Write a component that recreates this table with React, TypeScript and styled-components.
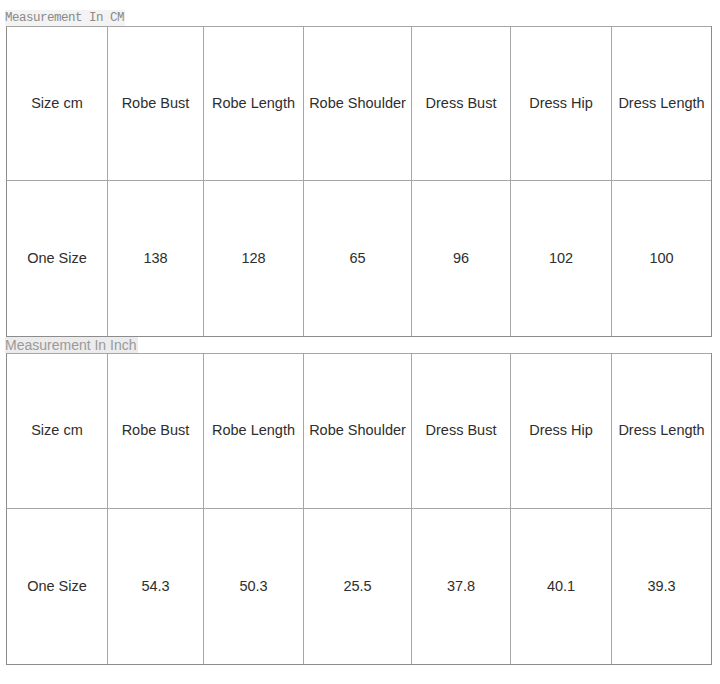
import React from 'react';
import styled, { createGlobalStyle } from 'styled-components';

const GlobalStyle = createGlobalStyle`
  html, body {
    margin: 0;
    padding: 0;
    background: #fff;
  }
`;

const Page = styled.div`
  width: 720px;
  padding: 10px 0 0 5px;
  box-sizing: border-box;
`;

const Caption = styled.div<{ mono?: boolean }>`
  width: fit-content;
  height: 16px;
  line-height: 16px;
  padding-right: 1px;
  font-family: ${({ mono }) => (mono ? '"Liberation Mono", "DejaVu Sans Mono", monospace' : '"Liberation Sans", Arial, sans-serif')};
  font-size: ${({ mono }) => (mono ? '12.5px' : '14px')};
  color: ${({ mono }) => (mono ? '#8a8a8a' : '#9a9a9a')};
  background: ${({ mono }) => (mono ? '#f3f3f3' : '#ececec')};
  letter-spacing: ${({ mono }) => (mono ? '-0.5px' : '0')};
  overflow: hidden;
`;

const Grid = styled.div<{ rows: string }>`
  display: grid;
  grid-template-columns: 101px 96px 100px 108px 99px 101px 100px;
  grid-template-rows: ${({ rows }) => rows};
  width: 706px;
  margin-left: 1px;
  box-sizing: border-box;
  border-right: 1px solid #8c8c8c;
  border-bottom: 1px solid #8c8c8c;
`;

const Cell = styled.div<{ first?: boolean }>`
  display: flex;
  align-items: center;
  justify-content: center;
  box-sizing: border-box;
  padding-bottom: 2px;
  border-top: 1px solid #a6a6a6;
  border-left: 1px solid ${({ first }) => (first ? '#8c8c8c' : '#a6a6a6')};
  font-family: "Liberation Sans", Arial, sans-serif;
  font-size: 14.5px;
  color: #2e2e2e;
  white-space: nowrap;
`;

const headers = ['Size cm', 'Robe Bust', 'Robe Length', 'Robe Shoulder', 'Dress Bust', 'Dress Hip', 'Dress Length'];

const cm = ['One Size', '138', '128', '65', '96', '102', '100'];
const inch = ['One Size', '54.3', '50.3', '25.5', '37.8', '40.1', '39.3'];

const SizeTable: React.FC<{ values: string[]; rows: string }> = ({ values, rows }) => (
  <Grid rows={rows}>
    {headers.map((h, i) => (
      <Cell key={'h' + i} first={i === 0}>{h}</Cell>
    ))}
    {values.map((v, i) => (
      <Cell key={'v' + i} first={i === 0}>{v}</Cell>
    ))}
  </Grid>
);

const App: React.FC = () => (
  <>
    <GlobalStyle />
    <Page>
      <Caption mono>Measurement In CM</Caption>
      <SizeTable values={cm} rows="154px 156px" />
      <Caption>Measurement In Inch</Caption>
      <SizeTable values={inch} rows="155px 156px" />
    </Page>
  </>
);

export default App;
